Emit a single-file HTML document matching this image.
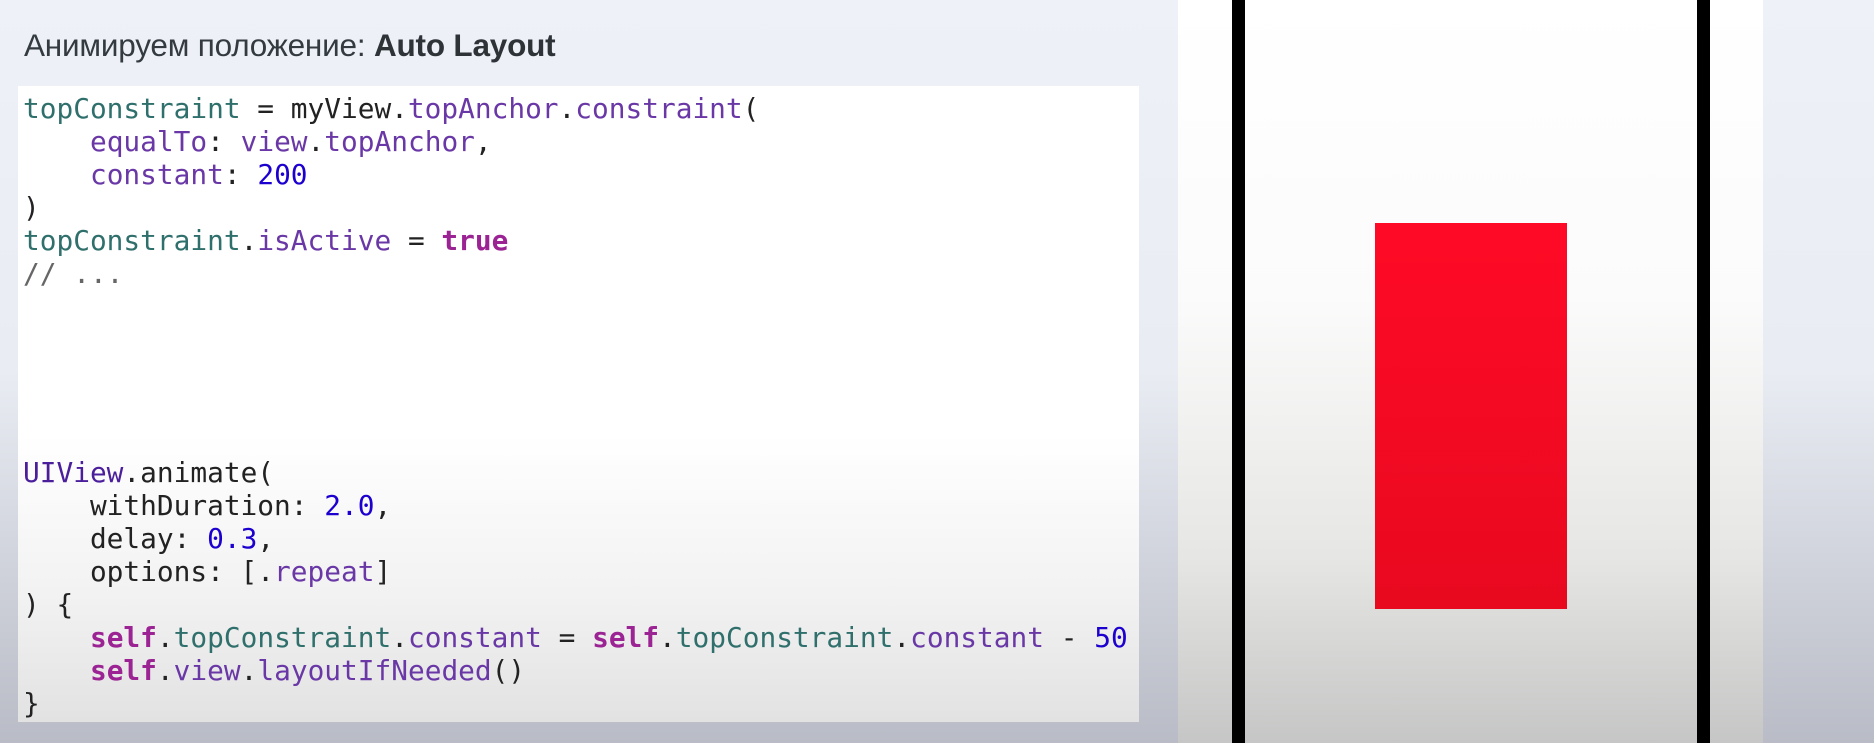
<!DOCTYPE html>
<html><head><meta charset="utf-8"><style>
html,body{margin:0;padding:0}
body{width:1874px;height:743px;position:relative;overflow:hidden;background:linear-gradient(#eef1f8 0%,#e9ecf3 50%,#b9bcc6 100%);font-family:"Liberation Sans",sans-serif}
.title{position:absolute;left:24px;top:27px;font-size:31.5px;color:#333a40;white-space:nowrap;letter-spacing:-0.2px}
.title b{font-weight:600;color:#2e3338}
.code{position:absolute;left:18px;top:86px;width:1121px;height:636px;background:linear-gradient(#ffffff 0%,#ffffff 55%,#f2f2f2 80%,#e2e2e2 100%)}
pre{margin:0;position:absolute;left:5px;top:6px;font-family:"DejaVu Sans Mono","Liberation Mono",monospace;font-size:27.8px;line-height:33.05px;color:#222}
.t{color:#2f6f6c}.p{color:#6a38a6}.n{color:#1c00cf}.k{color:#9b2393;font-weight:bold}.c{color:#666}.u{color:#4b1f9c}
.panel{position:absolute;left:1178px;top:0;width:585px;height:743px;background:linear-gradient(#ffffff 0%,#fbfbfb 40%,#e6e6e4 75%,#c5c6c5 100%)}
.bar{position:absolute;top:0;width:13px;height:743px;background:#000}
.red{position:absolute;left:1375px;top:223px;width:192px;height:386px;background:linear-gradient(#ff0a26,#e8091f)}
</style></head><body>
<div class="title">Анимируем положение: <b>Auto Layout</b></div>
<div class="code"><pre><span class="t">topConstraint</span> = myView.<span class="p">topAnchor</span>.<span class="p">constraint</span>(
    <span class="p">equalTo</span>: <span class="p">view</span>.<span class="p">topAnchor</span>,
    <span class="p">constant</span>: <span class="n">200</span>
)
<span class="t">topConstraint</span>.<span class="p">isActive</span> = <span class="k">true</span>
<span class="c">// ...</span>





<span class="u">UIView</span>.animate(
    withDuration: <span class="n">2.0</span>,
    delay: <span class="n">0.3</span>,
    options: [.<span class="p">repeat</span>]
) {
    <span class="k">self</span>.<span class="t">topConstraint</span>.<span class="p">constant</span> = <span class="k">self</span>.<span class="t">topConstraint</span>.<span class="p">constant</span> - <span class="n">50</span>
    <span class="k">self</span>.<span class="p">view</span>.<span class="p">layoutIfNeeded</span>()
}</pre></div>
<div class="panel"></div>
<div class="bar" style="left:1232px"></div>
<div class="bar" style="left:1697px"></div>
<div class="red"></div>
</body></html>
